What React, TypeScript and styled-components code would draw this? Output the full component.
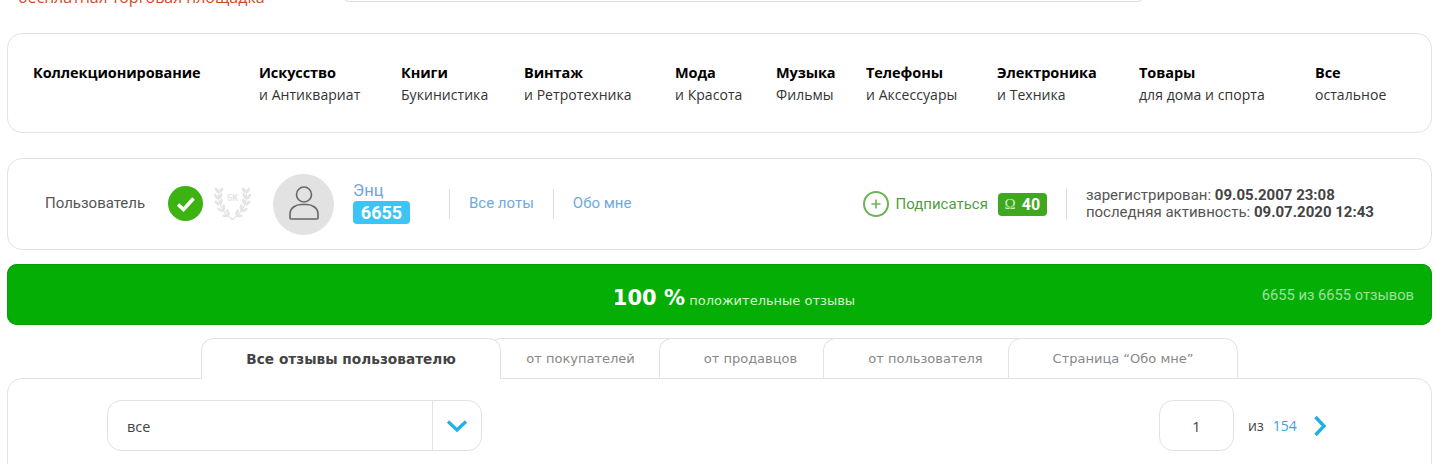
import React from "react";
import styled, { createGlobalStyle } from "styled-components";

const GlobalStyle = createGlobalStyle`
html, body {
    margin: 0;
    padding: 0;
    background: #fff;
    overflow: hidden;
}
* {
    box-sizing: border-box;
}
`;

const Page = styled.div`
width: 1435px;
height: 464px;
padding: 0 3px 0 7px;
overflow: hidden;
font-family: Roboto, sans-serif;
`;

/* Header, cut off by the top of the window */
const Header = styled.header`
height: 33px;
display: flex;
align-items: flex-start;
overflow: hidden;
`;

const Tagline = styled.div`
margin: -13px 0 0 11px;
width: 322px;
font-family: "Open Sans", sans-serif;
font-size: 16px;
line-height: 20px;
color: #d4491f;
white-space: nowrap;
`;

const SearchBox = styled.div`
margin-top: -40px;
width: 807px;
height: 42px;
border: 1px solid #ddd;
border-radius: 10px;
`;

/* Categories */
const Card = styled.div`
border: 1px solid #e2e2e2;
border-radius: 15px;
background: #fff;
`;

const CategoryCard = styled(Card)`
height: 100px;
padding: 28px 0 0 25px;
display: grid;
grid-template-columns: 226px 142px 123px 151px 101px 90px 131px 142px 176px 1fr;
align-items: start;
`;

const Category = styled.a`
display: block;
color: #000;
`;

const CategoryTitle = styled.div`
font-family: "Open Sans", sans-serif;
font-size: 14.5px;
font-weight: 700;
line-height: 22px;
letter-spacing: -0.08px;
white-space: nowrap;
`;

const CategorySub = styled.div`
font-family: "Open Sans", sans-serif;
font-size: 14px;
line-height: 22px;
color: #333;
letter-spacing: 0.05px;
white-space: nowrap;
`;

/* User card */
const UserCard = styled(Card)`
margin-top: 25px;
height: 92px;
display: flex;
align-items: center;
padding-left: 37px;
`;

const UserLabel = styled.div`
width: 123px;
padding-bottom: 2px;
font-size: 15px;
color: #555;
`;

const Badge = styled.svg`
margin-bottom: 1px;
flex: none;
`;

const Laurel = styled(Badge)`
margin-left: 11px;
`;

const Avatar = styled.div`
margin-left: 22px;
width: 61px;
height: 61px;
flex: none;
border-radius: 50%;
background: #e2e2e2;
display: flex;
align-items: center;
justify-content: center;
`;

const NameBlock = styled.div`
margin-left: 19px;
width: 96px;
padding-bottom: 3px;
`;

const UserName = styled.div`
font-size: 16.5px;
line-height: 20px;
color: #6fa5da;
`;

const RatingBadge = styled.div`
width: 57px;
height: 23px;
border-radius: 4px;
background: #3cc4f6;
color: #fff;
font-size: 18px;
font-weight: 700;
line-height: 24px;
text-align: center;
`;

const UserLink = styled.a`
height: 30px;
padding: 0 19px 0 19px;
border-left: 1px solid #ddd;
font-size: 15px;
line-height: 28px;
color: #6fa9dc;
white-space: nowrap;
`;

const Subscribe = styled.div`
margin-left: 213px;
display: flex;
align-items: center;
font-size: 15px;
color: #4f9f3f;
white-space: nowrap;
`;

const SubscribeLabel = styled.span`
margin: 0 10px 0 6px;
`;

const OhmBadge = styled.div`
width: 49px;
height: 23px;
border-radius: 4px;
background: #3fa81f;
color: #fff;
display: flex;
align-items: center;
justify-content: center;
gap: 6px;
font-size: 16px;
font-weight: 700;
`;

const OhmSign = styled.span`
font-family: "Liberation Serif", serif;
font-size: 15px;
font-weight: 400;
color: #cdeac0;
`;

const Dates = styled.div`
margin-left: 19px;
height: 30px;
padding-left: 19px;
border-left: 1px solid #ddd;
font-size: 15px;
line-height: 17px;
color: #555;
white-space: nowrap;
display: flex;
flex-direction: column;
justify-content: center;
b {
    font-weight: 700;
    color: #444;
}
`;

/* Rating bar */
const RatingBar = styled.div`
margin-top: 14px;
height: 61px;
border-radius: 10px;
background: #05ae05;
color: #fff;
display: grid;
grid-template-columns: 1fr auto 1fr;
align-items: center;
padding: 0 18px 0 0;
box-shadow: inset 0 0 0 1px #0a9e0a;
`;

const RatingMain = styled.div`
padding: 6px 0 0 47px;
font-family: "DejaVu Sans", sans-serif;
font-size: 13px;
color: #d8f2d8;
white-space: nowrap;
b {
    font-size: 21px;
    font-weight: 700;
    color: #fff;
}
`;

const RatingCount = styled.div`
justify-self: end;
font-size: 14.7px;
color: #9fe09f;
white-space: nowrap;
`;

/* Tabs */
const TabRow = styled.div`
margin: 13px 0 -1px 194px;
display: flex;
position: relative;
z-index: 1;
`;

const Tab = styled.div<{ $width: number; $shift?: number; $active?: boolean; $last?: boolean }>`
flex: none;
width: ${props => props.$width}px;
height: 41px;
margin-right: ${props => props.$last ? 0 : -13}px;
padding-left: ${props => props.$shift || 0}px;
border: 1px solid #e2e2e2;
border-right: ${props => props.$active || props.$last ? "1px solid #e2e2e2" : "none"};
border-bottom: ${props => props.$active ? "1px solid #fff" : "1px solid #e2e2e2"};
border-radius: ${props => props.$active || props.$last ? "13px 13px 0 0" : "13px 0 0 0"};
background: #fff;
font-family: "DejaVu Sans", sans-serif;
font-size: ${props => props.$active ? "13.7px" : "13px"};
font-weight: ${props => props.$active ? 700 : 400};
color: ${props => props.$active ? "#444" : "#888"};
line-height: 40px;
text-align: center;
white-space: nowrap;
z-index: ${props => props.$active ? 2 : "auto"};
`;

const Panel = styled(Card)`
height: 140px;
padding: 21px 0 0 99px;
display: flex;
align-items: flex-start;
font-family: "Open Sans", sans-serif;
font-size: 14.5px;
color: #444;
`;

const Select = styled.div`
width: 375px;
height: 51px;
border: 1px solid #e2e2e2;
border-radius: 14px;
display: flex;
align-items: center;
`;

const SelectValue = styled.div`
flex: 1;
padding: 1px 0 0 19px;
`;

const SelectArrow = styled.div`
width: 49px;
height: 100%;
border-left: 1px solid #e2e2e2;
display: flex;
align-items: center;
justify-content: center;
`;

const PageInput = styled.div`
margin-left: 677px;
width: 75px;
height: 51px;
padding-top: 1px;
border: 1px solid #e2e2e2;
border-radius: 14px;
display: flex;
align-items: center;
justify-content: center;
`;

const PageInfo = styled.div`
margin-left: 14px;
height: 51px;
display: flex;
align-items: center;
gap: 9px;
font-size: 14px;
`;

const PageTotal = styled.a`
color: #35a4d6;
`;

const NextArrow = styled.svg`
margin-left: 7px;
`;

const categories = [
    ["Коллекционирование", ""],
    ["Искусство", "и Антиквариат"],
    ["Книги", "Букинистика"],
    ["Винтаж", "и Ретротехника"],
    ["Мода", "и Красота"],
    ["Музыка", "Фильмы"],
    ["Телефоны", "и Аксессуары"],
    ["Электроника", "и Техника"],
    ["Товары", "для дома и спорта"],
    ["Все", "остальное"],
];

const tabs = [
    { text: "от покупателей", width: 184 },
    { text: "от продавцов", width: 177, shift: 5 },
    { text: "от пользователя", width: 198, shift: 6 },
    { text: "Страница “Обо мне”", width: 230, last: true },
];

const CheckIcon = () => (
    <Badge width="35" height="35" viewBox="0 0 35 35">
        <circle cx="17.5" cy="17.5" r="17.5" fill="#3db213" />
        <path d="M10 18.500l5.500 5L25.500 12.500" fill="none" stroke="#fff" strokeWidth="3.6" />
    </Badge>
);

// x, y, tilt of each leaf pair along the left branch
const leaves = [
    [5, 6, 0],
    [4.500, 12, -5],
    [5.500, 18, -15],
    [9, 24, -35],
    [14, 29, -55],
];

const LaurelIcon = () => (
    <Laurel width="37" height="36" viewBox="0 0 37 36">
        {[1, -1].map(side => (
            <g key={side} transform={side === 1 ? "" : "translate(37 0) scale(-1 1)"} fill="#e4e4e4">
                <path d="M5 3C3 14 7 27 20 34" fill="none" stroke="#e4e4e4" strokeWidth="1.2" />
                {leaves.map(([x, y, tilt]) => (
                    <g key={y} transform={`translate(${x} ${y}) rotate(${tilt})`}>
                        <ellipse cx="-2.200" cy="-1.600" rx="3.200" ry="1.400" transform="rotate(60 -2.200 -1.600)" />
                        <ellipse cx="2.200" cy="-1.600" rx="3.200" ry="1.400" transform="rotate(-60 2.200 -1.600)" />
                    </g>
                ))}
            </g>
        ))}
        <text x="18.500" y="15" textAnchor="middle" fontFamily="Roboto, sans-serif" fontSize="9" fontWeight="700" fill="#e4e4e4">5K</text>
    </Laurel>
);

const PersonIcon = () => (
    <svg width="32" height="36" viewBox="0 0 32 36" fill="none" stroke="#666" strokeWidth="1.6">
        <circle cx="16" cy="8.500" r="7.500" />
        <path d="M2 32v-4C2 22 8 18.500 13 18.500h6c5 0 11 3.500 11 9.500v4q0 1-1 1H3q-1 0-1-1z" strokeLinejoin="round" />
    </svg>
);

const PlusIcon = () => (
    <svg width="26" height="26" viewBox="0 0 26 26" fill="none" stroke="#6fb25a">
        <circle cx="13" cy="13" r="12" strokeWidth="2" />
        <path d="M13 8.500v9M8.500 13h9" strokeWidth="1.6" />
    </svg>
);

export default function App() {
    return (
        <Page>
            <GlobalStyle />
            <Header>
                <Tagline>бесплатная торговая площадка</Tagline>
                <SearchBox />
            </Header>
            <CategoryCard>
                {categories.map(([title, sub]) => (
                    <Category key={title}>
                        <CategoryTitle>{title}</CategoryTitle>
                        <CategorySub>{sub}</CategorySub>
                    </Category>
                ))}
            </CategoryCard>
            <UserCard>
                <UserLabel>Пользователь</UserLabel>
                <CheckIcon />
                <LaurelIcon />
                <Avatar><PersonIcon /></Avatar>
                <NameBlock>
                    <UserName>Энц</UserName>
                    <RatingBadge>6655</RatingBadge>
                </NameBlock>
                <UserLink>Все лоты</UserLink>
                <UserLink>Обо мне</UserLink>
                <Subscribe>
                    <PlusIcon />
                    <SubscribeLabel>Подписаться</SubscribeLabel>
                    <OhmBadge><OhmSign>Ω</OhmSign>40</OhmBadge>
                </Subscribe>
                <Dates>
                    <div>зарегистрирован: <b>09.05.2007 23:08</b></div>
                    <div>последняя активность: <b>09.07.2020 12:43</b></div>
                </Dates>
            </UserCard>
            <RatingBar>
                <span />
                <RatingMain><b>100 %</b> положительные отзывы</RatingMain>
                <RatingCount>6655 из 6655 отзывов</RatingCount>
            </RatingBar>
            <TabRow>
                <Tab $width={300} $active>Все отзывы пользователю</Tab>
                {tabs.map(tab => (
                    <Tab key={tab.text} $width={tab.width} $shift={tab.shift} $last={tab.last}>{tab.text}</Tab>
                ))}
            </TabRow>
            <Panel>
                <Select>
                    <SelectValue>все</SelectValue>
                    <SelectArrow>
                        <svg width="22" height="14" viewBox="0 0 22 14" fill="none" stroke="#22aee8" strokeWidth="3.2">
                            <path d="M2 2.500l9 8.500 9-8.500" />
                        </svg>
                    </SelectArrow>
                </Select>
                <PageInput>1</PageInput>
                <PageInfo>
                    <span>из</span>
                    <PageTotal>154</PageTotal>
                    <NextArrow width="14" height="22" viewBox="0 0 14 22" fill="none" stroke="#22aee8" strokeWidth="3.4">
                        <path d="M2.500 2l8.500 9-8.500 9" />
                    </NextArrow>
                </PageInfo>
            </Panel>
        </Page>
    );
}
